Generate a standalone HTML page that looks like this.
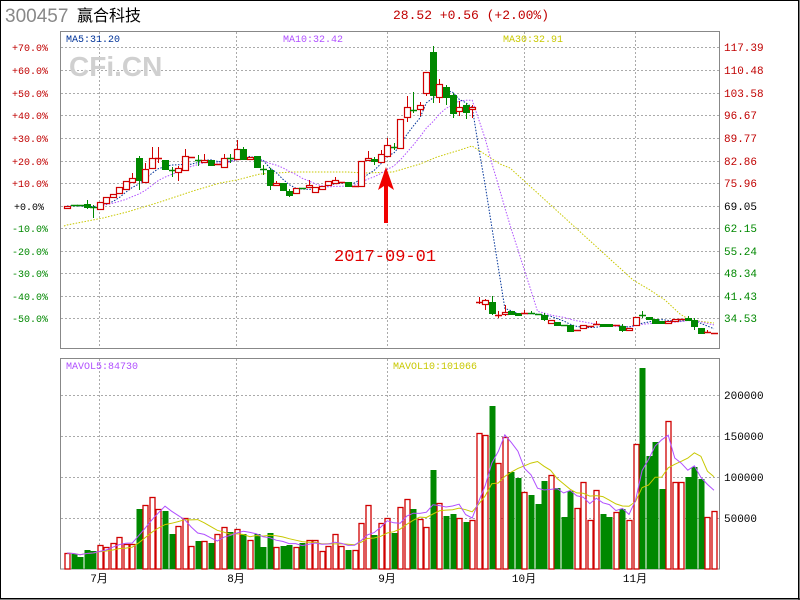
<!DOCTYPE html>
<html><head><meta charset="utf-8">
<style>
html,body{margin:0;padding:0;background:#fff;}
#wrap{position:relative;width:800px;height:600px;overflow:hidden;background:#fff;}
svg{position:absolute;left:0;top:0;}
text{font-family:"Liberation Mono",monospace;}
</style></head><body><div id="wrap">
<svg id="s" width="800" height="600" xmlns="http://www.w3.org/2000/svg">
<rect x="0.5" y="0.5" width="798" height="598" fill="none" stroke="#000" stroke-width="1"/>
<line x1="799" y1="0" x2="799" y2="600" stroke="#000"/>
<line x1="0" y1="599" x2="800" y2="599" stroke="#000"/>
<text x="5" y="22" font-size="19" fill="#888" style="font-family:'Liberation Sans',sans-serif">300457</text>
<text x="77" y="21" font-size="16" fill="#000" style="font-family:'Liberation Sans','Noto Sans CJK SC',sans-serif">赢合科技</text>
<text x="393" y="19" font-size="13" fill="#c00000">28.52 +0.56 (+2.00%)</text>
<g id="grid"></g>
<rect x="60.5" y="31.5" width="659" height="317" fill="none" stroke="#888"/>
<rect x="60.5" y="358.5" width="659" height="210.5" fill="none" stroke="#888"/>
<text x="69" y="76" font-size="28" fill="#d0d0d0" style="font-family:'Liberation Sans',sans-serif;font-weight:bold">CFi.CN</text>
<text x="66" y="42" font-size="10" fill="#003399">MA5:31.20</text>
<text x="283" y="42" font-size="10" fill="#b050ff">MA10:32.42</text>
<text x="503" y="42" font-size="10" fill="#c8c800">MA30:32.91</text>
<text x="66" y="369" font-size="10" fill="#b050ff">MAVOL5:84730</text>
<text x="393" y="369" font-size="10" fill="#c8c800">MAVOL10:101066</text>
<g font-size="10" text-anchor="end">
<text x="48" y="51" fill="#c00000">+70.0%</text>
<text x="48" y="74" fill="#c00000">+60.0%</text>
<text x="48" y="97" fill="#c00000">+50.0%</text>
<text x="48" y="119" fill="#c00000">+40.0%</text>
<text x="48" y="142" fill="#c00000">+30.0%</text>
<text x="48" y="165" fill="#c00000">+20.0%</text>
<text x="48" y="187" fill="#c00000">+10.0%</text>
<text x="44" y="210" fill="#000">+0.0%</text>
<text x="48" y="232" fill="#008800">-10.0%</text>
<text x="48" y="255" fill="#008800">-20.0%</text>
<text x="48" y="277" fill="#008800">-30.0%</text>
<text x="48" y="300" fill="#008800">-40.0%</text>
<text x="48" y="322" fill="#008800">-50.0%</text>
</g>
<g font-size="11">
<text x="724" y="51" fill="#c00000">117.39</text>
<text x="724" y="74" fill="#c00000">110.48</text>
<text x="724" y="97" fill="#c00000">103.58</text>
<text x="724" y="119" fill="#c00000">96.67</text>
<text x="724" y="142" fill="#c00000">89.77</text>
<text x="724" y="165" fill="#c00000">82.86</text>
<text x="724" y="187" fill="#c00000">75.96</text>
<text x="724" y="210" fill="#000">69.05</text>
<text x="724" y="232" fill="#008800">62.15</text>
<text x="724" y="255" fill="#008800">55.24</text>
<text x="724" y="277" fill="#008800">48.34</text>
<text x="724" y="300" fill="#008800">41.43</text>
<text x="724" y="322" fill="#008800">34.53</text>
<text x="724" y="399" fill="#000">200000</text>
<text x="724" y="440" fill="#000">150000</text>
<text x="724" y="481" fill="#000">100000</text>
<text x="724" y="522" fill="#000">50000</text>
</g>
<g font-size="11" text-anchor="middle" fill="#000" style="font-family:'Liberation Sans','Noto Sans CJK SC',sans-serif">
<text x="99" y="582">7月</text>
<text x="236" y="582">8月</text>
<text x="387" y="582">9月</text>
<text x="524" y="582">10月</text>
<text x="635" y="582">11月</text>
</g>
<g id="plot"></g>
<text x="334" y="261" font-size="17" fill="#e00000">2017-09-01</text>
<polygon points="386,167 394,190 388,186 388,223 384,223 384,186 378,190" fill="#f00000"/>
</svg>
<script>
var NS="http://www.w3.org/2000/svg";
function el(p,t,a){var e=document.createElementNS(NS,t);for(var k in a)e.setAttribute(k,a[k]);p.appendChild(e);return e;}
var g=document.getElementById('grid');
var hy=[47,70,93,115,138,161,183,206,228,251,273,296,318];
hy.forEach(function(y){el(g,'line',{x1:61,x2:720,y1:y+.5,y2:y+.5,stroke:'#aaa','stroke-dasharray':'2,2'});});
[395,436,477,518].forEach(function(y){el(g,'line',{x1:61,x2:720,y1:y+.5,y2:y+.5,stroke:'#aaa','stroke-dasharray':'2,2'});});
[99,236,387,524,635].forEach(function(x){
 el(g,'line',{x1:x+.5,x2:x+.5,y1:32,y2:348,stroke:'#aaa','stroke-dasharray':'2,2'});
 el(g,'line',{x1:x+.5,x2:x+.5,y1:359,y2:569,stroke:'#aaa','stroke-dasharray':'2,2'});});
var C=[
['r',206,208],['g',205,206],['g',205,206],['g',204,207,200,209],['g',207,208,205,218],['r',202,209],['r',197,203],['r',194,197],['r',187,193],['r',181,189],
['r',178,182,173],['g',158,180,156,190],['r',169,182,163],['r',158,168,147],['r',158,159,147,163],['g',160,169],['g',170,171,167,177],['r',168,172,166,181],['r',156,170,149],['r',157,158],
['g',160,161,155,166],['r',160,162,154],['g',160,165],['r',164,165],['r',158,167,154],['g',158,159,154,163],['r',149,159,140],['g',149,159,147],['r',157,159],['g',156,167],
['g',169,170,165,175],['g',170,185,168,190],['r',183,185,181],['g',183,190],['g',191,195,189,197],['r',188,193],['g',188,189],['r',185,187,180],['r',187,192],['r',186,189],
['r',181,185],['r',180,183,177],['r',182,183],['g',182,186],['r',186,187],['r',161,186],['r',158,160,151],['g',159,161,157,165],['r',154,162,150],['r',145,156,138],
['g',147,148,143,150],['r',119,148],['r',107,117,96,122],['g',110,111,92,113],['r',105,109,102,116],['r',72,93,72,96],['g',52,95,46,103],['r',84,97,79,103],['g',87,97,85,105],['g',95,113,93,118],
['r',107,111,101,116],['g',105,112,103,119],['r',107,109,105,118],['r',302,303,297,304],['r',300,304,299,310],['g',302,313,296,315],['r',315,316,311,318],['r',312,314,305,316],['g',311,314],['g',313,315],
['r',313,314,310],['g',313,314,311],['g',314,315],['g',315,319,313,321],['r',320,323],['g',322,325],['g',325,326],['g',325,331],['r',330,331],['r',325,328],
['r',326,327],['r',324,325,321],['g',324,326],['g',324,326],['r',325,326],['g',326,330,324,332],['r',328,330],['r',317,325],['g',315,316,311,318],['g',317,319],
['g',319,323],['g',321,323],['r',321,323],['r',319,321],['r',319,320],['g',318,320,316],['g',320,326,318,330],['g',328,333],['r',332,333,330],['r',333,334]];
var V=[553,554,557,550,551,545,547,543,537,544,544,509,505,497,509,511,534,526,518,546,541,541,543,534,527,532,529,534,540,534,547,533,547,546,545,547,543,540,540,551,546,534,546,550,550,523,505,535,
523,518,533,507,499,509,519,527,470,503,516,514,518,522,520,433,435,406,463,437,472,478,492,495,504,481,475,488,517,491,508,482,520,490,514,517,512,509,520,444,368,456,442,489,421,482,482,477,467,479,517,511];
var VC="rggggrrrrr"+"rgrrrggrrr"+"grgrrgrgrg"+"ggrggrgrrr"+"rrrgrrrg"+"rrgrrgrrgr"+"ggrgrrrgrr"+"ggrgggrggg"+"rrrrggrgrr"+"ggggrrrggg"+"rr";
function X(i){return 67+i*6.535;}
var p=document.getElementById('plot');
function cls(i){return C[i][0]=='r'?C[i][1]:C[i][2];}
function ma(arr,n,i){var s=0,c=0;for(var k=Math.max(0,i-n+1);k<=i;k++){s+=arr[k];c++;}return s/c;}
var closes=C.map(function(c,i){return cls(i);});
function poly(pts,col,dash){el(p,'polyline',{points:pts.join(' '),fill:'none',stroke:col,'stroke-width':1,'stroke-dasharray':dash||'none'});}
var m30=[[64,226],[67,225],[103,218],[127,212],[160,202],[193,191],[220,183],[237,180],[260,174],[293,172],[347,172],[365,173],[393,172],[420,164],[437,157],[460,150],[472,146],[483,153],[500,164],[510,168],[633,280],[650,290],[665,300],[680,314],[690,320],[714,323]];
poly(m30.map(function(q){return q.join(',')}),'#c8c800','1.5,1.5');
var a=[],b=[];
for(var i=0;i<100;i++){a.push(X(i)+','+ma(closes,10,i).toFixed(1));b.push(X(i)+','+ma(closes,5,i).toFixed(1));}
poly(a,'#b050ff','1.5,1.5');poly(b,'#003399','1.5,1.5');
C.forEach(function(c,i){
 var x=Math.round(X(i)),col=c[0]=='r'?'#d00000':'#008800';
 var t=c[1],bt=c[2],hi=c[3]||t,lo=c[4]||bt;
 el(p,'line',{x1:x+.5,x2:x+.5,y1:hi,y2:lo,stroke:col});
 if(bt-t<=1){el(p,'line',{x1:x-3,x2:x+4,y1:t+.5,y2:t+.5,stroke:col,'stroke-width':1.5});}
 else if(c[0]=='r'){el(p,'rect',{x:x-2.5,y:t+.5,width:6,height:bt-t,fill:'#fff',stroke:col,'stroke-width':1.2});}
 else{el(p,'rect',{x:x-3,y:t,width:7,height:bt-t+1,fill:col});}
});
V.forEach(function(v,i){
 var x=Math.round(X(i)),red=VC[i]=='r';
 if(red)el(p,'rect',{x:x-2,y:v+.5,width:5,height:568.5-v,fill:'#fff',stroke:'#d00000','stroke-width':1.3});
 else el(p,'rect',{x:x-2.5,y:v,width:6,height:569-v,fill:'#008800'});
});
var H=V.map(function(v){return 569-v;});var v5=[],v10=[];
for(var i=0;i<100;i++){v5.push(X(i)+','+(569-ma(H,5,i)).toFixed(1));v10.push(X(i)+','+(569-ma(H,10,i)).toFixed(1));}
poly(v10,'#c8c800');poly(v5,'#b050ff');
</script>
</div></body></html>
